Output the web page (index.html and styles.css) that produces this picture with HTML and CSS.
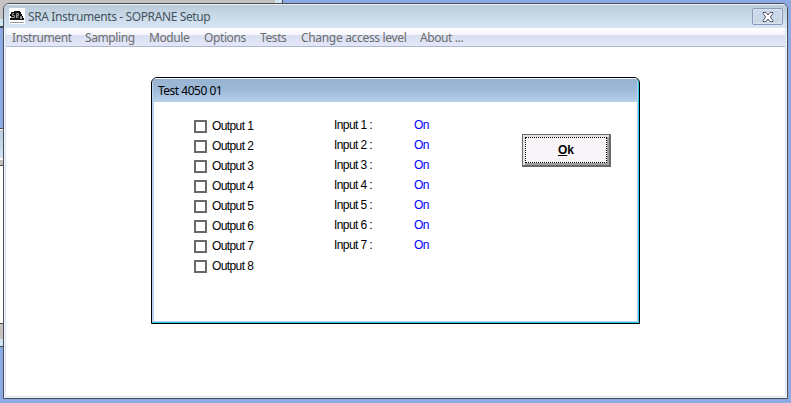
FILE: index.html
```html
<!DOCTYPE html>
<html lang="en">
<head>
<meta charset="utf-8">
<title>SRA Instruments - SOPRANE Setup</title>
<link rel="stylesheet" href="styles.css">
</head>
<body>
<div class="back back-top"></div>
<div class="back back-left"></div>
<main class="window">
  <header class="titlebar">
    <svg class="logo" width="16" height="16" viewBox="0 0 16 16"><path fill="#fff" d="M0 0h16v16H0z"/><path fill="#111" d="M1 6h1V4h3V3h6v1h1v2h1v2h1v2h1v2H1v-2h1V8H1z"/><path stroke="#999" fill="none" d="M5 5.500H3.500v2h2v2H2M7.500 10V5.500h2v2h-2l2 2.500M11.500 11V8.500h1V11"/><path fill="#999" d="M1 14h14v1H1z"/></svg>
    <h1 class="title">SRA Instruments - SOPRANE Setup</h1>
    <button class="close" aria-label="Close"><svg width="12" height="10" viewBox="0 0 12 10"><path d="M1 .5h3L6 3l2-2.500h3v1L8.300 5 11 8.500v1H8L6 7 4 9.500H1v-1L3.700 5 1 1.500z" fill="#fff" stroke="#535666"/></svg></button>
  </header>
  <nav class="menu"><span>Instrument</span><span>Sampling</span><span>Module</span><span>Options</span><span>Tests</span><span class="long">Change access level</span><span>About ...</span></nav>
  <div class="client">
    <section class="dialog">
      <h2 class="dialog-title">Test 4050 01</h2>
      <div class="dialog-body">
        <div class="outputs">
          <label><i></i>Output 1</label><label><i></i>Output 2</label><label><i></i>Output 3</label><label><i></i>Output 4</label><label><i></i>Output 5</label><label><i></i>Output 6</label><label><i></i>Output 7</label><label><i></i>Output 8</label>
        </div>
        <div class="inputs">
          <span>Input 1 :</span><b>On</b><span>Input 2 :</span><b>On</b><span>Input 3 :</span><b>On</b><span>Input 4 :</span><b>On</b><span>Input 5 :</span><b>On</b><span>Input 6 :</span><b>On</b><span>Input 7 :</span><b>On</b>
        </div>
        <button class="ok"><span><u>O</u>k</span></button>
      </div>
    </section>
  </div>
</main>
</body>
</html>
```
FILE: styles.css
```css
* { box-sizing: border-box; }
body { margin: 0; width: 791px; height: 403px; padding: 3px; overflow: hidden; background: #8caae6; font-family: "Liberation Sans", sans-serif; }
h1, h2 { margin: 0; font-weight: normal; }
button { padding: 0; }

/* windows that show behind the main one */
.back { position: absolute; left: 0; }
.back-top { top: 0; width: 283px; height: 28px; background: linear-gradient(#c4c2c3 19px, #cfe6f3 19px, #cfe6f3 26px, #4a4a4a 26px); border-right: 1px solid #4a4a4a; box-shadow: inset -7px 0 #cfe6f3; }
.back-left { top: 128px; width: 4px; height: 220px; background: linear-gradient(#4a4a4a 1px, #fff 1px 2px, #b9cadb 2px, #d3e4f4 30px, #fff 30px 32px, #c0bebe 32px 37px, #4a4a4a 37px 38px, #fff 38px 195px, #4a4a4a 195px 196px, #c4c2c3 196px 211px, #cfe6f3 211px 218px, #4a4a4a 218px 219px, #8caae6 219px); }

.window { position: relative; width: 785px; height: 396px; border: 1px solid #4c4c50; border-radius: 6px 6px 0 0; background: #fff; box-shadow: inset 0 0 0 1px #f2f6fc, inset 0 0 0 2px #d7e5f5; display: flex; flex-direction: column; overflow: hidden; }
.titlebar { height: 24px; flex: none; display: flex; align-items: center; padding: 0 4px 0 5px; background: linear-gradient(#edf3f8 1px, #bccbda 1px, #c9d8e6 11px, #d7e6f5); }
.title { font: 12px/24px "Noto Sans", sans-serif; color: #43545c; margin-left: 3px; flex: 1; white-space: nowrap; letter-spacing: -.38px; padding-top: 1px; }
.close { width: 31px; height: 17px; margin-top: 1px; border: 1px solid #8d9abb; border-radius: 2px; background: #cbd8e7; display: flex; align-items: center; justify-content: center; box-shadow: inset 0 0 0 1px #d9e3ef; }
.menu { height: 19px; flex: none; margin: 0 2px; display: grid; grid-template-columns: 73px 64px 55px 56px 41px 119px 1fr; padding-left: 6px; background: linear-gradient(#fff 0, #f5f6fd 7px, #d9def1 7px, #e4e7f8 18px, #adb9d0 18px); font: 12px/20px "Noto Sans", sans-serif; color: #6b6d6d; white-space: nowrap; letter-spacing: -.4px; }
.long { letter-spacing: -.32px; }
.client { flex: 1; padding: 30px 0 0 147px; }

.dialog { width: 489px; height: 247px; border: 1px solid #000; border-radius: 6px 6px 0 0; background: #fff; overflow: hidden; box-shadow: inset -1px -1px #28cde8, inset -2px -2px #b9d1ea, inset 2px 0 #b9d1f0; }
.dialog-title { height: 24px; border-top: 1px solid #f2f8ff; margin: 0 2px 0 1px; padding-left: 5px; background: linear-gradient(#99b4d1, #9bb8d8 10px, #b9d1ea); font: 12px/24px "Noto Sans", sans-serif; color: #000; letter-spacing: -.5px; }
.dialog-body { display: grid; grid-template-columns: 140px 188px 89px; padding: 14px 0 0 42px; font-size: 12px; line-height: 20px; color: #000; white-space: nowrap; }
.outputs label { display: flex; align-items: center; height: 20px; letter-spacing: -.6px; }
.outputs i { width: 13px; height: 13px; border: 2px solid #696969; margin: 1px 5px 0 0; }
.inputs { display: grid; grid-template-columns: 80px 60px; grid-auto-rows: 20px; align-content: start; line-height: 18px; letter-spacing: -.6px; }
.inputs b { font-weight: normal; color: #00f; }
.ok { width: 89px; height: 33px; margin-top: 18px; padding: 2px; border: 1px solid #696969; border-right-width: 2px; border-bottom-width: 2px; background: #f8f4f8; box-shadow: inset 2px 2px #e3e3e3, inset -2px -2px #a0a0a0; font: bold 12px/25px "Liberation Sans", sans-serif; color: #000; }
.ok span { display: block; height: 26px; border: 1px dotted #000; }
```
